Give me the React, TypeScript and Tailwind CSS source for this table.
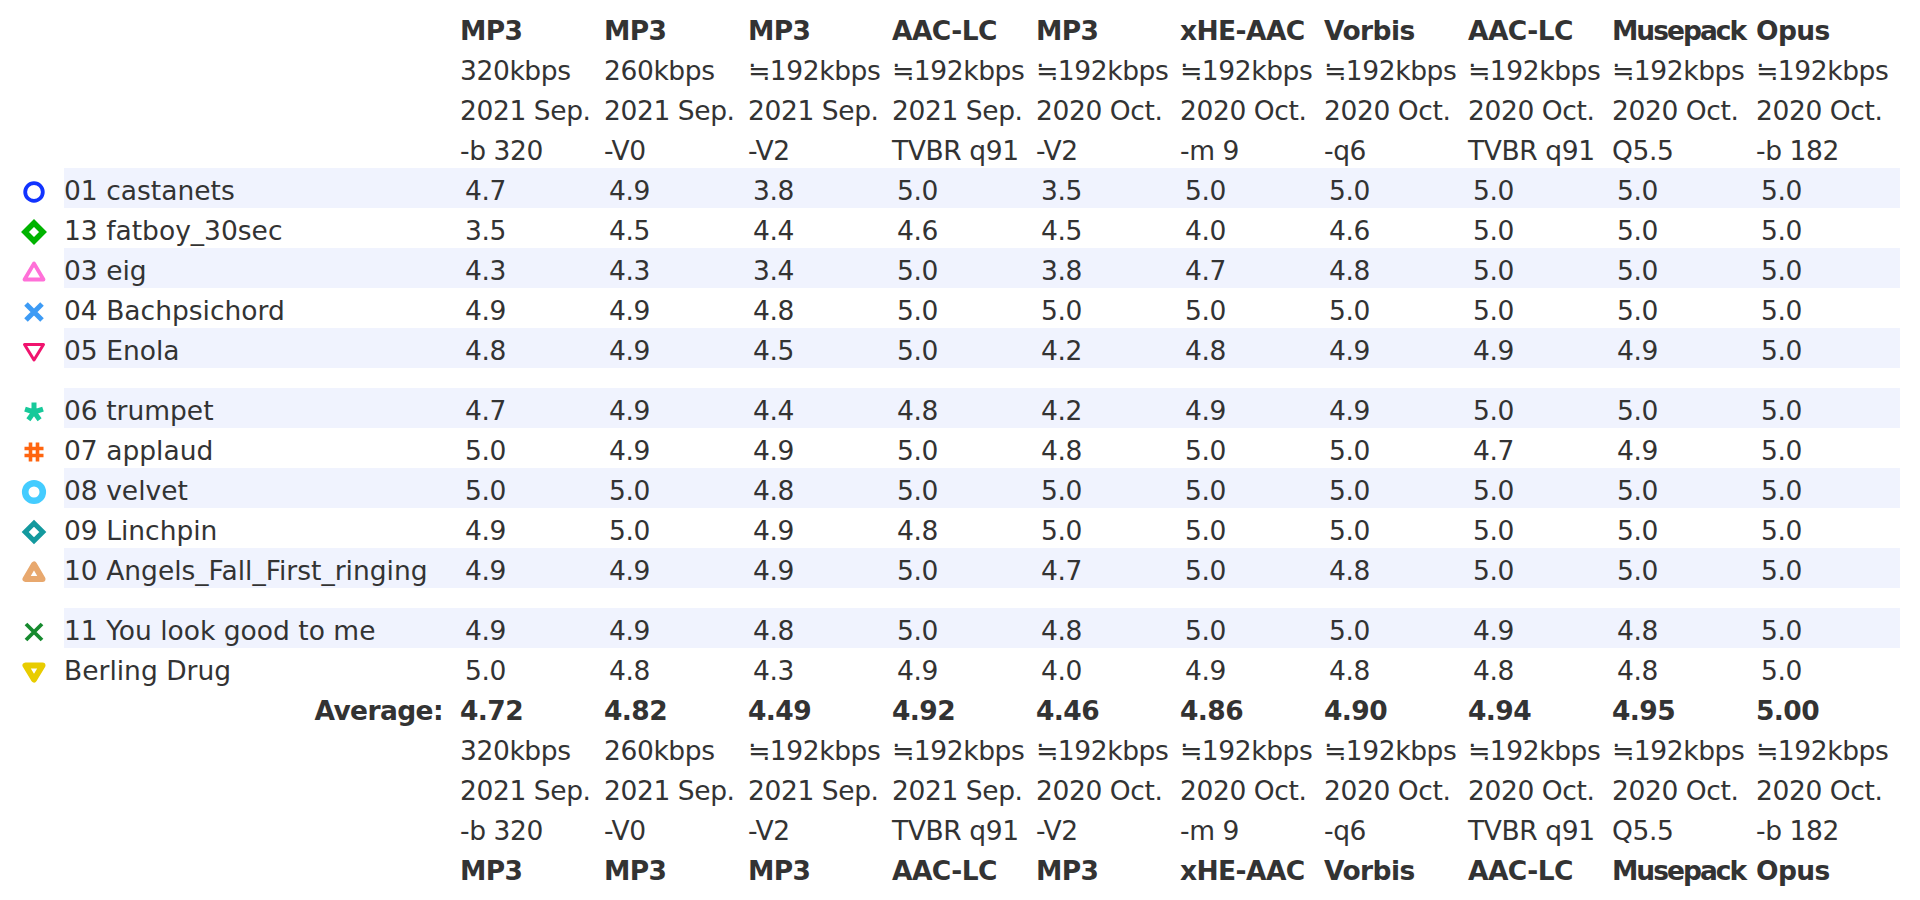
import type { ReactNode } from "react";

type Row = { name: string; icon: ReactNode; v: number[]; hl: boolean };

function Box({ children }: { children: ReactNode }) {
  return (
    <svg width={26} height={26} viewBox="0 0 26 26" fill="none" strokeLinejoin="round">
      {children}
    </svg>
  );
}

const icons = {
  castanets: (
    <Box>
      <circle cx="13" cy="13" r="8.8" stroke="#1133ff" strokeWidth="3.8" />
    </Box>
  ),
  fatboy: (
    <Box>
      <polygon points="13,4 22,13 13,22 4,13" stroke="#00b300" strokeWidth="5.6" strokeLinejoin="miter" />
    </Box>
  ),
  eig: (
    <Box>
      <polygon points="13,4.5 3.5,20.5 22.5,20.5" stroke="#ff70d8" strokeWidth="3.8" />
    </Box>
  ),
  bach: (
    <Box>
      <path d="M5 5L21 21M21 5L5 21" stroke="#3d9bf5" strokeWidth="5" />
    </Box>
  ),
  enola: (
    <Box>
      <polygon points="3.5,5.5 22.5,5.5 13,21" stroke="#f0146e" strokeWidth="3" />
    </Box>
  ),
  trumpet: (
    <Box>
      <path
        d="M13 13L13 3.5M13 13L22 10.1M13 13L18.6 20.7M13 13L7.4 20.7M13 13L4 10.1"
        stroke="#17c99a"
        strokeWidth="5"
      />
    </Box>
  ),
  applaud: (
    <Box>
      <path d="M9.5 3.5V22.5M16.5 3.5V22.5M3.5 9.5H22.5M3.5 16.5H22.5" stroke="#ff650f" strokeWidth="3.6" />
    </Box>
  ),
  velvet: (
    <Box>
      <circle cx="13" cy="13" r="8.8" stroke="#44ccff" strokeWidth="6.6" />
    </Box>
  ),
  linchpin: (
    <Box>
      <polygon points="13,4.2 21.8,13 13,21.8 4.2,13" stroke="#13999e" strokeWidth="5" strokeLinejoin="miter" />
    </Box>
  ),
  angels: (
    <Box>
      <polygon points="13,5.5 4.5,20 21.5,20" stroke="#e8a86e" strokeWidth="6" />
    </Box>
  ),
  youlook: (
    <Box>
      <path d="M5 5L21 21M21 5L5 21" stroke="#168a2e" strokeWidth="3.8" />
    </Box>
  ),
  berling: (
    <Box>
      <polygon points="4.5,6.5 21.5,6.5 13,20.5" stroke="#e8cc00" strokeWidth="6" />
    </Box>
  ),
};

const codecs = [
  ["MP3", "320kbps", "2021 Sep.", "-b 320"],
  ["MP3", "260kbps", "2021 Sep.", "-V0"],
  ["MP3", "≒192kbps", "2021 Sep.", "-V2"],
  ["AAC-LC", "≒192kbps", "2021 Sep.", "TVBR q91"],
  ["MP3", "≒192kbps", "2020 Oct.", "-V2"],
  ["xHE-AAC", "≒192kbps", "2020 Oct.", "-m 9"],
  ["Vorbis", "≒192kbps", "2020 Oct.", "-q6"],
  ["AAC-LC", "≒192kbps", "2020 Oct.", "TVBR q91"],
  ["Musepack", "≒192kbps", "2020 Oct.", "Q5.5"],
  ["Opus", "≒192kbps", "2020 Oct.", "-b 182"],
];

const groups: Row[][] = [
  [
    { name: "01 castanets", icon: icons.castanets, v: [4.7, 4.9, 3.8, 5.0, 3.5, 5.0, 5.0, 5.0, 5.0, 5.0], hl: true },
    { name: "13 fatboy_30sec", icon: icons.fatboy, v: [3.5, 4.5, 4.4, 4.6, 4.5, 4.0, 4.6, 5.0, 5.0, 5.0], hl: false },
    { name: "03 eig", icon: icons.eig, v: [4.3, 4.3, 3.4, 5.0, 3.8, 4.7, 4.8, 5.0, 5.0, 5.0], hl: true },
    { name: "04 Bachpsichord", icon: icons.bach, v: [4.9, 4.9, 4.8, 5.0, 5.0, 5.0, 5.0, 5.0, 5.0, 5.0], hl: false },
    { name: "05 Enola", icon: icons.enola, v: [4.8, 4.9, 4.5, 5.0, 4.2, 4.8, 4.9, 4.9, 4.9, 5.0], hl: true },
  ],
  [
    { name: "06 trumpet", icon: icons.trumpet, v: [4.7, 4.9, 4.4, 4.8, 4.2, 4.9, 4.9, 5.0, 5.0, 5.0], hl: true },
    { name: "07 applaud", icon: icons.applaud, v: [5.0, 4.9, 4.9, 5.0, 4.8, 5.0, 5.0, 4.7, 4.9, 5.0], hl: false },
    { name: "08 velvet", icon: icons.velvet, v: [5.0, 5.0, 4.8, 5.0, 5.0, 5.0, 5.0, 5.0, 5.0, 5.0], hl: true },
    { name: "09 Linchpin", icon: icons.linchpin, v: [4.9, 5.0, 4.9, 4.8, 5.0, 5.0, 5.0, 5.0, 5.0, 5.0], hl: false },
    { name: "10 Angels_Fall_First_ringing", icon: icons.angels, v: [4.9, 4.9, 4.9, 5.0, 4.7, 5.0, 4.8, 5.0, 5.0, 5.0], hl: true },
  ],
  [
    { name: "11 You look good to me", icon: icons.youlook, v: [4.9, 4.9, 4.8, 5.0, 4.8, 5.0, 5.0, 4.9, 4.8, 5.0], hl: true },
    { name: "Berling Drug", icon: icons.berling, v: [5.0, 4.8, 4.3, 4.9, 4.0, 4.9, 4.8, 4.8, 4.8, 5.0], hl: false },
  ],
];

const averages = ["4.72", "4.82", "4.49", "4.92", "4.46", "4.86", "4.90", "4.94", "4.95", "5.00"];

const line = "h-[40px] pt-[6px] leading-[34px] whitespace-nowrap";

function Codec({ name }: { name: string }) {
  const tight = name === "Musepack" ? "tracking-[-2px]" : "tracking-[-0.6px]";
  return <div className={`${line} font-bold ${tight}`}>{name}</div>;
}

function Header({ bottom }: { bottom?: boolean }) {
  return (
    <div className="flex">
      <div className="w-[452px] shrink-0" />
      <div className="grid grid-cols-[repeat(10,144px)] tracking-[-0.4px]">
        {codecs.map(([codec, rate, date, opt], i) => (
          <div key={i} className="flex flex-col">
            {!bottom && <Codec name={codec} />}
            <div className={line}>{rate}</div>
            <div className={line}>{date}</div>
            <div className={line}>{opt}</div>
            {bottom && <Codec name={codec} />}
          </div>
        ))}
      </div>
    </div>
  );
}

function DataRow({ row }: { row: Row }) {
  return (
    <div className="flex h-[40px]">
      <div className="flex w-[56px] shrink-0 items-center pt-[8px]">
        <span className="ml-[13px] flex">{row.icon}</span>
      </div>
      <div className={`grid grid-cols-[396px_repeat(10,144px)] ${row.hl ? "bg-[#f0f3fe]" : ""}`}>
        <div className={line}>{row.name}</div>
        {row.v.map((n, i) => (
          <div key={i} className={`${line} pl-[5px] tracking-[-0.4px]`}>
            {n.toFixed(1)}
          </div>
        ))}
      </div>
    </div>
  );
}

export default function App() {
  return (
    <div className="min-h-[900px] bg-white pl-[8px] pt-[8px] font-['DejaVu_Sans','Noto_Sans_CJK_JP',sans-serif] text-[26.5px] text-[#333333]">
      <Header />
      {groups.map((g, gi) => (
        <div key={gi} className={gi > 0 ? "pt-[20px]" : ""}>
          {g.map((r) => (
            <DataRow key={r.name} row={r} />
          ))}
        </div>
      ))}
      <div className="flex">
        <div className={`${line} w-[452px] shrink-0 pr-[17px] text-right font-bold tracking-[-0.6px]`}>Average:</div>
        <div className="grid grid-cols-[repeat(10,144px)]">
          {averages.map((a, i) => (
            <div key={i} className={`${line} font-bold tracking-[-0.6px]`}>
              {a}
            </div>
          ))}
        </div>
      </div>
      <Header bottom />
    </div>
  );
}
